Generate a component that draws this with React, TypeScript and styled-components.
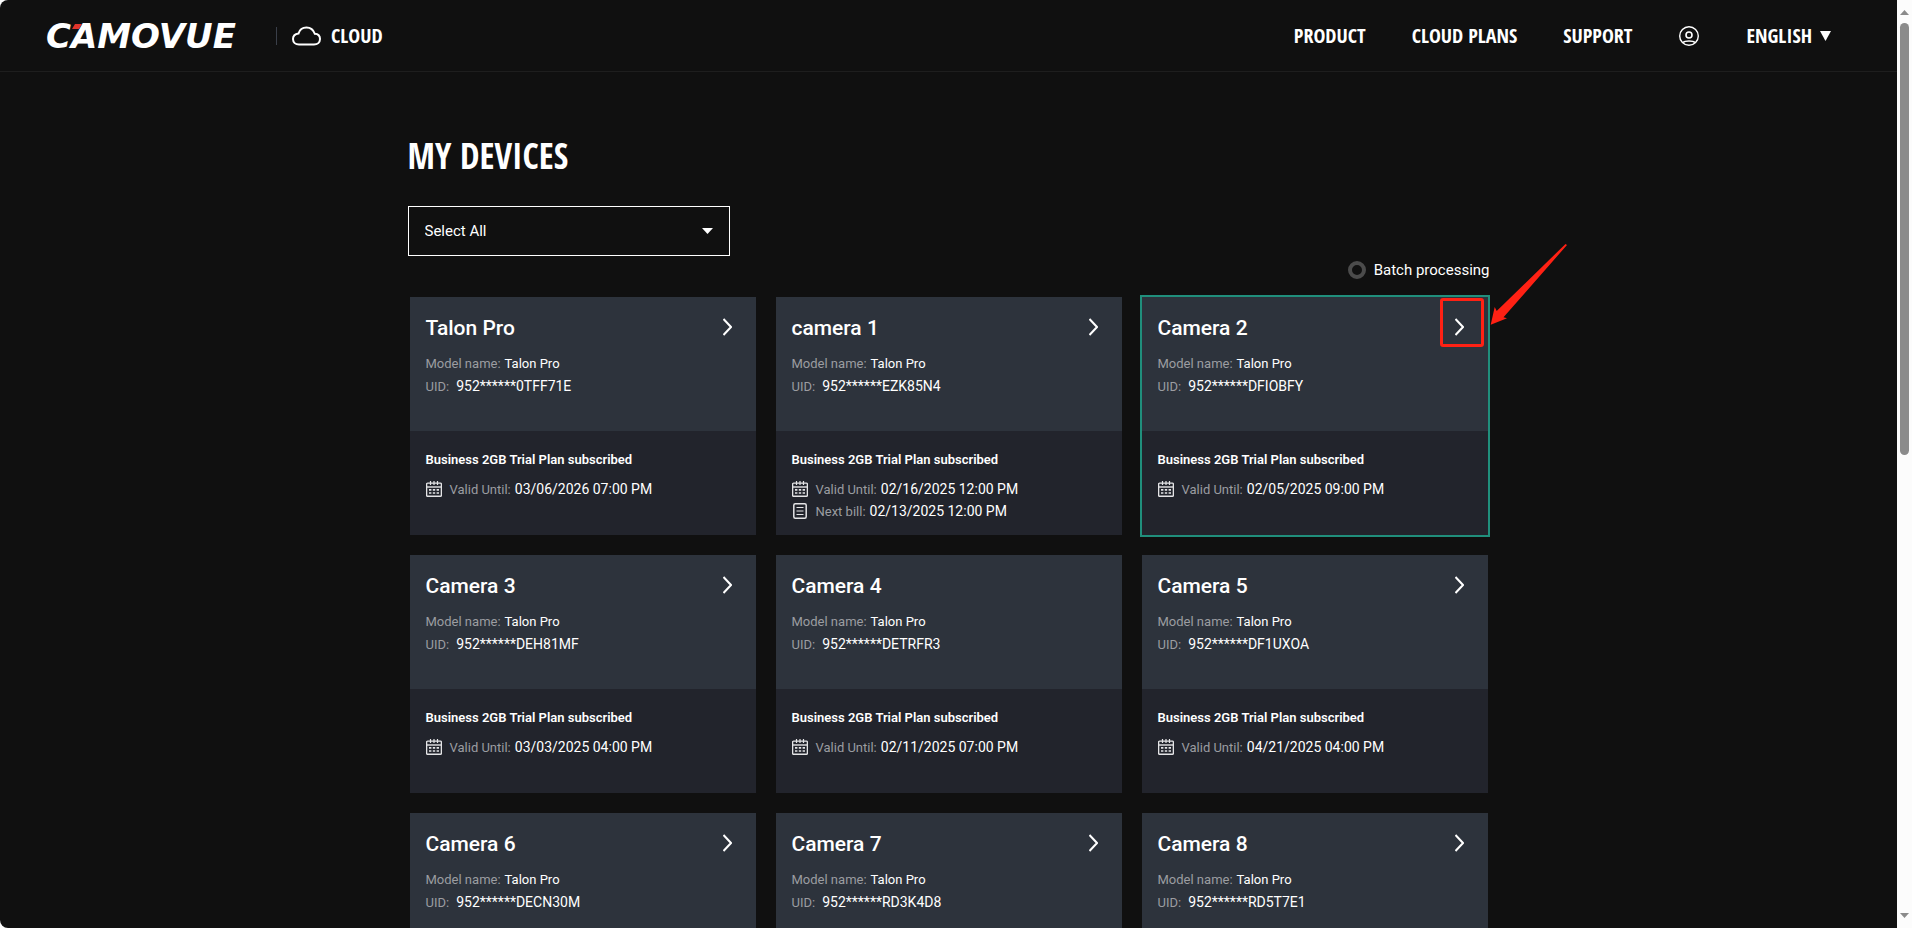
import React, { useState } from 'react';
import styled, { createGlobalStyle } from 'styled-components';

const display = '"Open Sans Condensed", "Roboto Condensed", "Liberation Sans", sans-serif';
const body = 'Roboto, "Liberation Sans", sans-serif';

const GlobalStyle = createGlobalStyle`
  *, *::before, *::after { box-sizing: border-box; }
  html, body { margin: 0; overflow: hidden; background: #fcfcfc; }
  body { font-family: ${body}; color: #fff; }
  h1, h2, h3, p { margin: 0; }
  button, select, input { font: inherit; color: inherit; margin: 0; }
`;

const Window = styled.div`
  display: flex;
  height: 100vh;
`;

const Page = styled.div`
  flex: 1;
  min-width: 0;
  overflow-x: hidden;
  overflow-y: auto;
  scrollbar-width: none;
  background: #101010;
  border-radius: 8px 0 0 8px;
`;

const Scrollbar = styled.div`
  width: 15px;
  padding: 8px 0;
  display: flex;
  flex-direction: column;
  align-items: center;
  gap: 8px;
  background: #fcfcfc;
`;

const ScrollArrow = styled.svg`
  display: block;
  width: 9px;
  height: 7px;
  flex: none;
  fill: #8b8b8b;
`;

const ScrollTrack = styled.div`
  flex: 1;
  width: 9px;
`;

const ScrollThumb = styled.div`
  height: 49%;
  border-radius: 5px;
  background: #8b8b8b;
`;

const Header = styled.header`
  display: flex;
  align-items: center;
  justify-content: space-between;
  height: 72px;
  padding: 0 66px 0 46px;
  border-bottom: 1px solid #1e1e1e;
  font-family: ${display};
  font-size: 20px;
  font-weight: 700;
  line-height: 28px;
`;

const Brand = styled.a`
  display: flex;
  align-items: center;
  color: #fff;
  text-decoration: none;
`;

const Wordmark = styled.span`
  position: relative;
  width: 214px;
  font: italic 700 34px/36px "DejaVu Sans", sans-serif;
`;

const RedMark = styled.svg`
  position: absolute;
  left: 26px;
  top: 6px;
  width: 10px;
  height: 5px;
  fill: #e0342b;
`;

const Divider = styled.span`
  width: 1px;
  height: 18px;
  margin: 0 15px 0 16px;
  background: #3a3f49;
`;

const CloudIcon = styled.svg`
  width: 29px;
  height: 20px;
  margin-right: 10px;
  fill: none;
  stroke: #fff;
  stroke-width: 2;
`;

const Nav = styled.nav`
  display: flex;
  align-items: center;
  gap: 46px;
`;

const NavLink = styled.a`
  display: flex;
  color: #fff;
  text-decoration: none;
`;

const UserIcon = styled.svg`
  display: block;
  width: 22px;
  height: 22px;
  fill: none;
  stroke: #fff;
`;

const LanguageButton = styled.button`
  display: flex;
  align-items: center;
  gap: 8px;
  padding: 0;
  border: 0;
  background: none;
`;

const Caret = styled.svg<{ $w: number; $h: number }>`
  display: block;
  width: ${(p) => p.$w}px;
  height: ${(p) => p.$h}px;
  fill: #fff;
  pointer-events: none;
`;

const Main = styled.main`
  max-width: 1082px;
  margin: 0 auto;
  padding-top: 60px;
`;

const Title = styled.h1`
  font: 700 35px/48px ${display};
`;

const FilterBox = styled.div`
  display: grid;
  grid-template-columns: 1fr 28px;
  align-items: center;
  width: 322px;
  height: 50px;
  margin-top: 26px;

  & > * { grid-row: 1; }
`;

const FilterSelect = styled.select`
  grid-column: 1 / 3;
  width: 100%;
  height: 100%;
  padding: 0 16px;
  border: 1px solid #fff;
  border-radius: 0;
  background: #101010;
  appearance: none;
  font-size: 15px;
`;

const CaretSlot = styled.span`
  grid-column: 2;
  z-index: 1;
  pointer-events: none;
`;

const BatchRow = styled.label`
  display: flex;
  align-items: center;
  justify-content: flex-end;
  gap: 8px;
  height: 28px;
  font-size: 15px;
`;

const BatchRadio = styled.input`
  appearance: none;
  width: 18px;
  height: 18px;
  border: 4px solid #4b4b4b;
  border-radius: 50%;
`;

const Grid = styled.div`
  display: grid;
  grid-template-columns: repeat(3, 1fr);
  gap: 16px;
  margin-top: 11px;
`;

const Card = styled.article<{ $active?: boolean }>`
  position: relative;
  border: 2px solid ${(p) => (p.$active ? '#208f7c' : 'transparent')};
`;

const CardTop = styled.div`
  display: flex;
  justify-content: space-between;
  align-items: flex-start;
  height: 134px;
  padding: 16px 24px 0 16px;
  background: #2d333c;
`;

const CardBottom = styled.div`
  height: 104px;
  padding: 17px 16px 0;
  background: #22242c;
`;

const DeviceName = styled.h2`
  margin-bottom: 9px;
  font-size: 21px;
  font-weight: 500;
  line-height: 30px;
`;

const Line = styled.p`
  display: flex;
  font-size: 13px;
  line-height: 23px;
`;

const Label = styled.span`
  margin-right: 4px;
  color: #9b9da1;
`;

const Uid = styled.span`
  margin-left: 3px;
  font-size: 14px;
`;

const OpenButton = styled.button`
  display: flex;
  padding: 5px 0;
  border: 0;
  background: none;
`;

const Chevron = styled.svg`
  width: 9px;
  height: 18px;
  fill: none;
  stroke: #fff;
  stroke-width: 2;
`;

const Plan = styled.h3`
  margin-bottom: 6px;
  font-size: 13px;
  font-weight: 600;
  line-height: 24px;
`;

const DateLine = styled.div`
  display: flex;
  align-items: center;
  height: 22px;
  font-size: 13px;
`;

const DateIcon = styled.svg`
  width: 16px;
  height: 16px;
  margin-right: 8px;
  fill: none;
  stroke: #e4e4e6;
`;

const DateValue = styled.time`
  font-size: 14px;
`;

const Highlight = styled.div`
  position: absolute;
  top: 1px;
  right: 4px;
  width: 44px;
  height: 49px;
  border: 3px solid #ff2114;
  border-radius: 3px;
`;

const Pointer = styled.svg`
  position: absolute;
  top: -53px;
  left: 100%;
  width: 80px;
  height: 84px;
  fill: #ff2114;
`;

type Device = { name: string; uid: string; valid?: string; bill?: string; open?: boolean; active?: boolean };

const devices: Device[] = [
  { name: 'Talon Pro', uid: '952******0TFF71E', valid: '03/06/2026 07:00 PM' },
  { name: 'camera 1', uid: '952******EZK85N4', valid: '02/16/2025 12:00 PM', bill: '02/13/2025 12:00 PM' },
  { name: 'Camera 2', uid: '952******DFIOBFY', valid: '02/05/2025 09:00 PM', active: true },
  { name: 'Camera 3', uid: '952******DEH81MF', valid: '03/03/2025 04:00 PM' },
  { name: 'Camera 4', uid: '952******DETRFR3', valid: '02/11/2025 07:00 PM', open: false },
  { name: 'Camera 5', uid: '952******DF1UXOA', valid: '04/21/2025 04:00 PM' },
  { name: 'Camera 6', uid: '952******DECN30M' },
  { name: 'Camera 7', uid: '952******RD3K4D8' },
  { name: 'Camera 8', uid: '952******RD5T7E1' },
];

const Calendar = () => (
  <DateIcon viewBox="0 0 16 16" aria-hidden="true">
    <rect x="0.6" y="2.1" width="14.8" height="13.2" rx="1" strokeWidth="1.4" />
    <path d="M1 6h14" strokeWidth="1.4" />
    <path d="M4.5 0v4M8 0v4M11.5 0v4" strokeWidth="1.2" />
    <path d="M3 8.9h2.4M6.8 8.9h2.4M10.6 8.9H13M3 12h2.4M6.8 12h2.4M10.6 12H13" strokeWidth="1.6" />
  </DateIcon>
);

const Bill = () => (
  <DateIcon viewBox="0 0 16 16" aria-hidden="true">
    <rect x="1.8" y="0.8" width="12.4" height="14.4" rx="1.5" strokeWidth="1.5" />
    <path d="M4.5 4.5h7M4.5 8h7M4.5 11.5h7" strokeWidth="1.2" />
  </DateIcon>
);

function DeviceCard({ name, uid, valid, bill, open = true, active }: Device) {
  return (
    <Card $active={active}>
      <CardTop>
        <div>
          <DeviceName>{name}</DeviceName>
          <Line><Label>Model name:</Label>Talon Pro</Line>
          <Line><Label>UID:</Label><Uid>{uid}</Uid></Line>
        </div>
        {open && (
          <OpenButton aria-label={`Open ${name}`}>
            <Chevron viewBox="0 0 9 18"><path d="M0.5 1L8 9L0.5 17" /></Chevron>
          </OpenButton>
        )}
      </CardTop>
      <CardBottom>
        {valid && (
          <>
            <Plan>Business 2GB Trial Plan subscribed</Plan>
            <DateLine><Calendar /><Label>Valid Until:</Label><DateValue>{valid}</DateValue></DateLine>
          </>
        )}
        {bill && <DateLine><Bill /><Label>Next bill:</Label><DateValue>{bill}</DateValue></DateLine>}
      </CardBottom>
      {active && (
        <>
          <Highlight />
          <Pointer viewBox="0 0 80 84" aria-hidden="true">
            <path d="M77.5 0L79 1L15.5 73.3L19 74.3L2.7 80.7L6.7 63L8.7 67Z" />
          </Pointer>
        </>
      )}
    </Card>
  );
}

export default function App() {
  const [batch, setBatch] = useState(false);
  return (
    <Window>
      <GlobalStyle />
      <Page>
        <Header>
          <Brand href="#">
            <Wordmark>
              CAMOVUE
              <RedMark viewBox="0 0 10 5"><path d="M3 0H10L7 5H0Z" /></RedMark>
            </Wordmark>
            <Divider />
            <CloudIcon viewBox="0 0 29 20">
              <path d="M7 18.5H22C25.5 18.5 28 16.2 28 13C28 10 26 8 22.8 7.8C21.5 4 18.5 1.5 14.5 1.5C10.5 1.5 7.5 4 6.5 7.5C3.2 8 1 10 1 13C1 16.2 3.5 18.5 7 18.5Z" />
            </CloudIcon>
            CLOUD
          </Brand>
          <Nav>
            <NavLink href="#product">PRODUCT</NavLink>
            <NavLink href="#plans">CLOUD PLANS</NavLink>
            <NavLink href="#support">SUPPORT</NavLink>
            <NavLink href="#account" aria-label="Account">
              <UserIcon viewBox="0 0 22 22">
                <circle cx="11" cy="11" r="9.3" strokeWidth="1.4" />
                <circle cx="11" cy="10" r="3" strokeWidth="1.6" />
                <path d="M5 17.5C7 15.5 15 15.5 17 17.5" strokeWidth="1.6" />
              </UserIcon>
            </NavLink>
            <LanguageButton>
              ENGLISH
              <Caret $w={11} $h={10} viewBox="0 0 11 10"><path d="M0 0H11L5.5 10Z" /></Caret>
            </LanguageButton>
          </Nav>
        </Header>
        <Main>
          <Title>MY DEVICES</Title>
          <FilterBox>
            <FilterSelect aria-label="Filter devices">
              <option>Select All</option>
            </FilterSelect>
            <CaretSlot>
              <Caret $w={11} $h={6} viewBox="0 0 11 6"><path d="M0 0H11L5.5 6Z" /></Caret>
            </CaretSlot>
          </FilterBox>
          <BatchRow>
            <BatchRadio type="radio" checked={batch} onChange={() => setBatch(true)} />
            Batch processing
          </BatchRow>
          <Grid>
            {devices.map((d) => <DeviceCard key={d.name} {...d} />)}
          </Grid>
        </Main>
      </Page>
      <Scrollbar aria-hidden="true">
        <ScrollArrow viewBox="0 0 9 7"><path d="M0 7L4.5 2L9 7Z" /></ScrollArrow>
        <ScrollTrack><ScrollThumb /></ScrollTrack>
        <ScrollArrow viewBox="0 0 9 7"><path d="M0 0L4.5 5L9 0Z" /></ScrollArrow>
      </Scrollbar>
    </Window>
  );
}
